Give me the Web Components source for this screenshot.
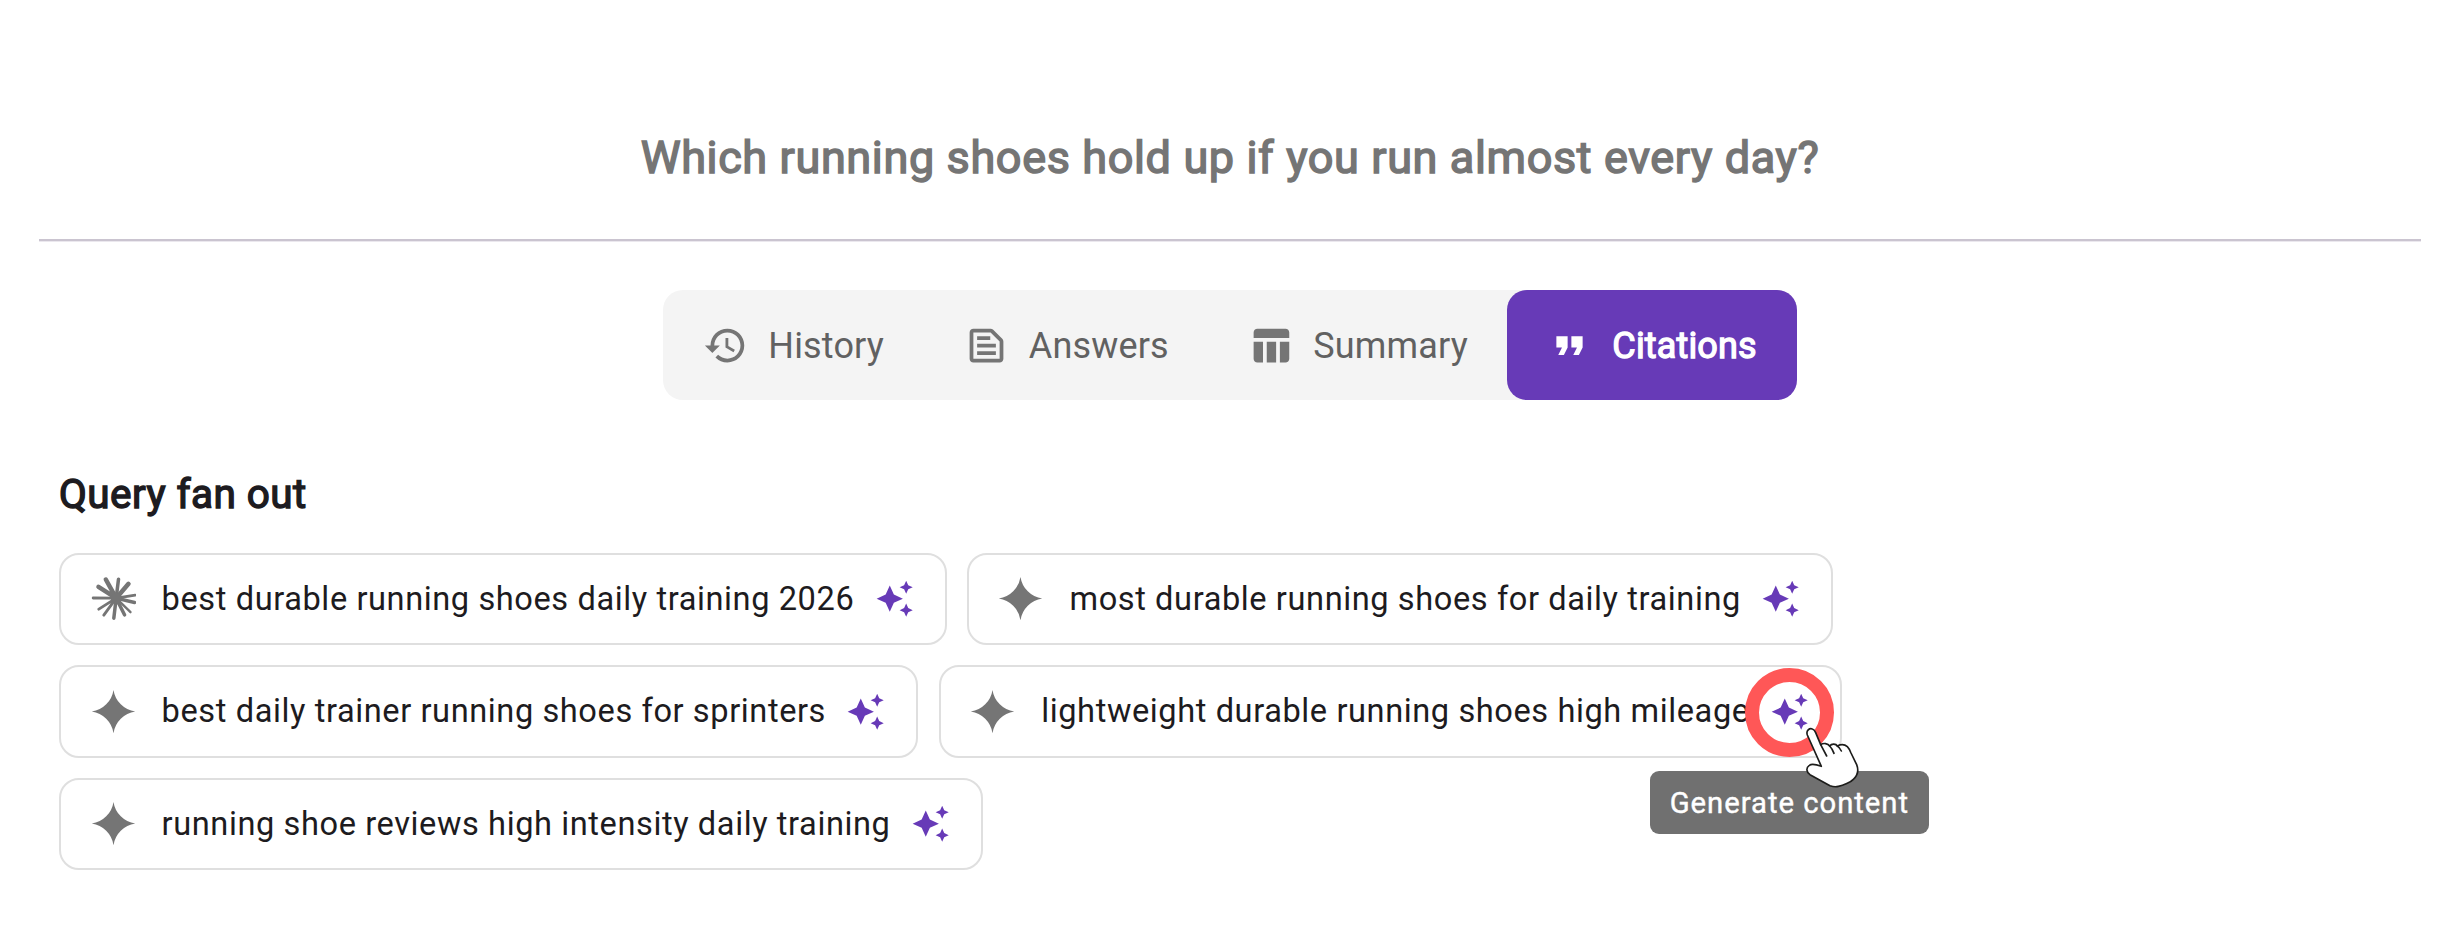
<!DOCTYPE html>
<html lang="en">
<head>
<meta charset="utf-8">
<title>Citations</title>
<style>
  html, body { margin: 0; background: #fff; }
  body { font-family: Roboto, "Noto Sans", sans-serif; color: #1d1b20; }
</style>
</head>
<body>
<citations-page>
  <page-title slot="title">Which running shoes hold up if you run almost every day?</page-title>
  <tab-bar slot="tabs">
    <tab-item icon="history" style="--w:260.5px">History</tab-item>
    <tab-item icon="answers" style="--w:284.5px">Answers</tab-item>
    <tab-item icon="summary" style="--w:299px">Summary</tab-item>
    <tab-item icon="quote" selected style="--w:290px">Citations</tab-item>
  </tab-bar>
  <fan-out>
    <span slot="heading">Query fan out</span>
    <query-chip icon="burst">best durable running shoes daily training 2026</query-chip>
    <query-chip icon="spark">most durable running shoes for daily training</query-chip>
    <query-chip icon="spark">best daily trainer running shoes for sprinters</query-chip>
    <query-chip icon="spark">lightweight durable running shoes high mileage
      <hover-hint slot="hint">Generate content</hover-hint>
    </query-chip>
    <query-chip icon="spark">running shoe reviews high intensity daily training</query-chip>
  </fan-out>
</citations-page>

<script>
const ICONS = {
  history: ['0 0 24 24', '<path d="M13 3a9 9 0 0 0-9 9H1l3.89 3.89.07.14L9 12H6c0-3.87 3.13-7 7-7s7 3.13 7 7-3.13 7-7 7c-1.93 0-3.68-.79-4.94-2.06l-1.42 1.42A8.95 8.95 0 0 0 13 21a9 9 0 0 0 0-18zm-1 5v5l4.28 2.54.72-1.21-3.5-2.08V8H12z"/>'],
  answers: ['0 0 24 24', '<path d="M14.17 5 19 9.83V19H5V5h9.17m0-2H5c-1.1 0-2 .9-2 2v14c0 1.1.9 2 2 2h14c1.1 0 2-.9 2-2V9.83c0-.53-.21-1.04-.59-1.41l-4.83-4.83c-.37-.38-.88-.59-1.41-.59zM7 15h10v2H7v-2zm0-4h10v2H7v-2zm0-4h7v2H7V7z"/>'],
  summary: ['0 0 24 24', '<path d="M10 10.02h5V21h-5V10.02zM17 21h3c1.1 0 2-.9 2-2v-9h-5v11zm3-18H5c-1.1 0-2 .9-2 2v3h19V5c0-1.1-.9-2-2-2zM3 19c0 1.1.9 2 2 2h3V10H3v9z"/>'],
  quote: ['0 0 24 24', '<path d="M6 17h3l2-4V7H5v6h3l-2 4zm8 0h3l2-4V7h-6v6h3l-2 4z"/>'],
  sparkles: ['0 0 24 24', '<path d="m19 9 1.25-2.75L23 5l-2.75-1.25L19 1l-1.25 2.75L15 5l2.75 1.25L19 9zm-7.5.5L9 4 6.5 9.5 1 12l5.5 2.5L9 20l2.5-5.5L17 12l-5.5-2.5zM19 15l-1.25 2.75L15 19l2.75 1.25L19 23l1.25-2.75L23 19l-2.75-1.25L19 15z"/>'],
  spark: ['-.45 -.5 24.9 24.9', '<path d="M12 24A14.304 14.304 0 0 0 0 12 14.304 14.304 0 0 0 12 0a14.305 14.305 0 0 0 12 12 14.305 14.305 0 0 0-12 12"/>'],
  burst: ['19.5 19.5 135 135', '<g fill="none" stroke="currentColor" stroke-linecap="round"><path stroke-width="13.500" d="M95 86 64 30M95 86 132 43M95 86 42 52"/><path stroke-width="10.500" d="M95 86 102 29M95 86 150 99M95 86 120 136M95 86 88 146"/><path stroke-width="8.500" d="M95 86 152 77M95 86 58 137M95 86 43 119M95 86 26 85.500"/><path stroke-width="7" d="M95 86 138 128"/></g><circle cx="95" cy="86" r="16"/>']
};
const svg = name => `<svg viewBox="${ICONS[name][0]}" fill="currentColor" aria-hidden="true">${ICONS[name][1]}</svg>`;

function define(name, render) {
  customElements.define(name, class extends HTMLElement {
    constructor() {
      super();
      this.attachShadow({ mode: 'open' }).innerHTML = render(this);
    }
  });
}

define('citations-page', () => `
  <style>
    :host { display: flex; flex-direction: column; box-sizing: border-box; height: 934px; padding: 120px 35px 0 39px; overflow: hidden; }
    .rule { height: 2px; background: #cac4d0; border-bottom: 1px solid #ebe8ee; margin: 44px 0 48px; }
    .tabs { display: flex; justify-content: center; }
    .body { padding: 66px 0 0 20px; }
  </style>
  <slot name="title"></slot>
  <div class="rule"></div>
  <div class="tabs"><slot name="tabs"></slot></div>
  <div class="body"><slot></slot></div>`);

define('page-title', () => `
  <style>
    :host { display: block; text-align: center; font-size: 45px; line-height: 75px; letter-spacing: .63px; color: #757575; -webkit-text-stroke: 1.5px #757575; }
  </style><slot></slot>`);

define('tab-bar', () => `
  <style>
    :host { display: flex; height: 110px; border-radius: 20px; background: #f4f4f4; }
  </style><slot></slot>`);

define('tab-item', el => `
  <style>
    :host { display: flex; align-items: center; box-sizing: border-box; width: var(--w); padding: 1.500px 0 0 40.300px; gap: 20px; border-radius: 20px; font-size: 36px; line-height: 42px; letter-spacing: .16px; color: #616161; white-space: nowrap; }
    :host([selected]) { background: #673ab7; color: #fff; -webkit-text-stroke: 1.3px #fff; }
    svg { width: 45px; height: 45px; color: #757575; flex: none; }
    :host([selected]) svg { color: #fff; }
  </style>${svg(el.getAttribute('icon'))}<span><slot></slot></span>`);

define('fan-out', () => `
  <style>
    :host { display: block; }
    h2 { margin: 1.500px 0 33.250px; font-size: 40.500px; font-weight: 400; line-height: 52px; letter-spacing: .42px; -webkit-text-stroke: 1.4px #1d1b20; }
    .list { display: flex; flex-wrap: wrap; gap: 20.250px; }
  </style>
  <h2><slot name="heading"></slot></h2>
  <div class="list"><slot></slot></div>`);

define('query-chip', el => `
  <style>
    :host { display: flex; align-items: center; box-sizing: border-box; height: 92.250px; padding: 0 30.700px 0 29.600px; border: 2px solid #dfdfdf; border-radius: 20px; font-size: 32.600px; line-height: 40px; letter-spacing: .590px; white-space: nowrap; }
    .brand { display: flex; width: 45px; height: 45px; margin-right: 26px; color: #757575; }
    .action { position: relative; width: 39.375px; height: 39.375px; margin-left: 20.250px; color: #673ab7; }
    svg { width: 100%; height: 100%; display: block; }
  </style>
  <span class="brand">${svg(el.getAttribute('icon'))}</span>
  <span><slot></slot></span>
  <span class="action">${svg('sparkles')}<slot name="hint"></slot></span>`);

define('hover-hint', () => `
  <style>
    :host { position: absolute; inset: 0; }
    .ring { position: absolute; left: -25.100px; top: -23.800px; width: 61.600px; height: 61.600px; border: 14px solid #ff5757; border-radius: 50%; }
    .tip { position: absolute; left: -120.400px; top: 79.300px; display: flex; align-items: center; justify-content: center; box-sizing: border-box; width: 279.600px; height: 63px; padding-top: 2px; border-radius: 9px; background: #707070; color: #fff; font-size: 29.250px; letter-spacing: .980px; -webkit-text-stroke: .4px #fff; }
    .hand { position: absolute; left: 29.600px; top: 28.300px; width: 64px; height: 72px; }
  </style>
  <div class="ring"></div>
  <div class="tip"><slot></slot></div>
  <svg class="hand" viewBox="0 0 192 216" fill="#fff" stroke="#1d1d1b" stroke-width="5" stroke-linejoin="round" stroke-linecap="round" aria-hidden="true">
    <path d="M64 139 22 45C17 30 30 24 37 27c6 2 8 6 10 11l15 36c8-6 22-4 27 4 6-8 19-7 23 0 10-5 22-5 30 2 4 4 8 12 11 19l17 35c7 18 1 34-10 44-8 9-30 18-45 21-10 3-17 1-25-2L30 164c-12-8-12-21-2-28 8-6 22-2 36 3Z"/>
    <path fill="none" d="m62 74 18 34M89 78c6 6 10 14 13 22M112 78c6 4 9 9 12 15"/>
  </svg>`);
</script>
</body>
</html>
